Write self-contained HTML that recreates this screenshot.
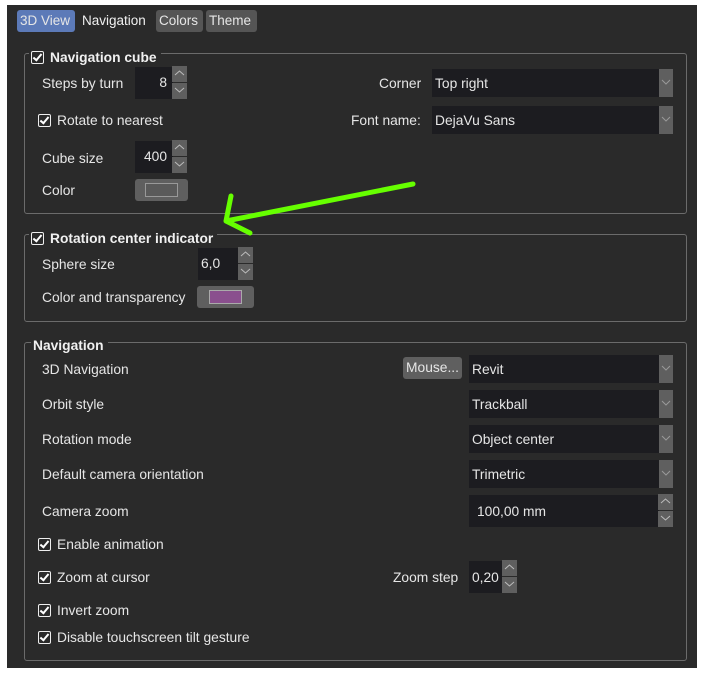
<!DOCTYPE html>
<html><head><style>
body{margin:0;width:709px;height:676px;background:#fff;position:relative;overflow:hidden;font-family:"Liberation Sans",sans-serif;font-size:13.8px;color:#e6e6e6}
.a{position:absolute;white-space:nowrap}
#bg{left:7px;top:5px;width:690px;height:663px;background:#2a2a2a}
.grp{position:absolute;border:1px solid #6b6b6b;border-radius:3px}
.ttl{position:absolute;background:#2a2a2a;font-weight:bold;padding:0 4px 0 2px;color:#f0f0f0}
.cb{display:inline-block;width:11px;height:11px;border:1px solid #eee;border-radius:2px;background:#2a2a2a;position:relative;vertical-align:-2px;margin-right:6px}
.cb:after{content:"";position:absolute;left:3px;top:0px;width:3px;height:7px;border:solid #fff;border-width:0 2px 2px 0;transform:rotate(40deg)}
.spin{position:absolute;background:#1c1c20;text-align:right;box-sizing:border-box;padding-right:6px}
.sb{position:absolute;background:#5f5f5f;width:15px}
.sb svg{display:block;margin:3px auto 0}
.combo{position:absolute;background:#1c1c20;box-sizing:border-box;padding-left:3px}
.combo .ar{position:absolute;right:0;top:0;bottom:0;width:14px;background:#5f5f5f}
.btn{position:absolute;background:#5f5f5f;border-radius:3px}
.tab{position:absolute;top:10px;height:22px;line-height:21px;border-radius:3px;padding:0 3px;white-space:nowrap;font-size:13.5px;box-sizing:border-box}
</style></head><body>
<div class="a" style="left:0;top:0;width:709px;height:5px;background:#fff"></div>
<div class="a" id="bg"></div>
<div class="tab" style="left:17px;background:#5c7ab8;width:58px">3D View</div>
<div class="tab" style="left:79px;color:#f0f0f0">Navigation</div>
<div class="tab" style="left:156px;background:#555;width:47px">Colors</div>
<div class="tab" style="left:206px;background:#555;width:51px">Theme</div>

<div class="grp" style="left:24px;top:53px;width:661px;height:159px"></div>
<div class="ttl" style="left:29px;top:50px"><span class="cb"></span>Navigation cube</div>
<div class="a" style="left:42px;top:76px">Steps by turn</div>
<div class="spin" style="left:135px;top:67px;width:38px;height:32px;line-height:32px">8</div>
<div class="sb" style="left:172px;top:66px;height:16px"><svg width="11" height="8"><path d="M1 6L5.5 2L10 6" stroke="#bbb" fill="none"/></svg></div>
<div class="sb" style="left:172px;top:83px;height:16px"><svg width="11" height="8"><path d="M1 2L5.5 6L10 2" stroke="#bbb" fill="none"/></svg></div>
<div class="a" style="left:38px;top:113px"><span class="cb"></span>Rotate to nearest</div>
<div class="a" style="left:42px;top:151px">Cube size</div>
<div class="spin" style="left:135px;top:141px;width:38px;height:32px;line-height:32px">400</div>
<div class="sb" style="left:172px;top:140px;height:16px"><svg width="11" height="8"><path d="M1 6L5.5 2L10 6" stroke="#bbb" fill="none"/></svg></div>
<div class="sb" style="left:172px;top:157px;height:16px"><svg width="11" height="8"><path d="M1 2L5.5 6L10 2" stroke="#bbb" fill="none"/></svg></div>
<div class="a" style="left:42px;top:183px">Color</div>
<div class="btn" style="left:135px;top:179px;width:53px;height:22px"><div class="a" style="left:10px;top:4px;width:31px;height:12px;border:1px solid #999;background:#5a5a5a"></div></div>
<div class="a" style="left:379px;top:76px">Corner</div>
<div class="combo" style="left:432px;top:69px;width:241px;height:28px;line-height:29px">Top right<div class="ar"><svg width="14" height="26"><path d="M3 11L7 15L11 11" stroke="#999" fill="none"/></svg></div></div>
<div class="a" style="left:351px;top:113px">Font name:</div>
<div class="combo" style="left:432px;top:106px;width:241px;height:28px;line-height:29px">DejaVu Sans<div class="ar"><svg width="14" height="26"><path d="M3 11L7 15L11 11" stroke="#999" fill="none"/></svg></div></div>

<div class="grp" style="left:24px;top:234px;width:661px;height:86px"></div>
<div class="ttl" style="left:29px;top:231px"><span class="cb"></span>Rotation center indicator</div>
<div class="a" style="left:42px;top:257px">Sphere size</div>
<div class="spin" style="left:198px;top:248px;width:40px;height:32px;line-height:32px;text-align:left;padding-left:3px">6,0</div>
<div class="sb" style="left:238px;top:247px;height:16px"><svg width="11" height="8"><path d="M1 6L5.5 2L10 6" stroke="#bbb" fill="none"/></svg></div>
<div class="sb" style="left:238px;top:264px;height:16px"><svg width="11" height="8"><path d="M1 2L5.5 6L10 2" stroke="#bbb" fill="none"/></svg></div>
<div class="a" style="left:42px;top:290px">Color and transparency</div>
<div class="btn" style="left:197px;top:286px;width:57px;height:22px"><div class="a" style="left:12px;top:4px;width:31px;height:12px;border:1px solid #aaa;background:#8a4f8e"></div></div>

<svg class="a" style="left:0;top:0" width="709" height="676"><path d="M413 184L226 221M231 196L226 221L250 233" stroke="#66ff00" stroke-width="5" stroke-linecap="round" stroke-linejoin="round" fill="none"/></svg>

<div class="grp" style="left:24px;top:342px;width:661px;height:317px"></div>
<div class="ttl" style="left:31px;top:338px">Navigation</div>
<div class="a" style="left:42px;top:362px">3D Navigation</div>
<div class="btn" style="left:403px;top:357px;width:59px;height:22px;line-height:22px;text-align:center">Mouse...</div>
<div class="combo" style="left:469px;top:355px;width:204px;height:28px;line-height:29px">Revit<div class="ar"><svg width="14" height="26"><path d="M3 11L7 15L11 11" stroke="#999" fill="none"/></svg></div></div>
<div class="a" style="left:42px;top:397px">Orbit style</div>
<div class="combo" style="left:469px;top:390px;width:204px;height:28px;line-height:29px">Trackball<div class="ar"><svg width="14" height="26"><path d="M3 11L7 15L11 11" stroke="#999" fill="none"/></svg></div></div>
<div class="a" style="left:42px;top:432px">Rotation mode</div>
<div class="combo" style="left:469px;top:425px;width:204px;height:28px;line-height:29px">Object center<div class="ar"><svg width="14" height="26"><path d="M3 11L7 15L11 11" stroke="#999" fill="none"/></svg></div></div>
<div class="a" style="left:42px;top:467px">Default camera orientation</div>
<div class="combo" style="left:469px;top:460px;width:204px;height:28px;line-height:29px">Trimetric<div class="ar"><svg width="14" height="26"><path d="M3 11L7 15L11 11" stroke="#999" fill="none"/></svg></div></div>
<div class="a" style="left:42px;top:504px">Camera zoom</div>
<div class="spin" style="left:469px;top:495px;width:190px;height:32px;line-height:33px;text-align:left;padding-left:8px">100,00 mm</div>
<div class="sb" style="left:658px;top:494px;height:16px"><svg width="11" height="8"><path d="M1 6L5.5 2L10 6" stroke="#bbb" fill="none"/></svg></div>
<div class="sb" style="left:658px;top:511px;height:16px"><svg width="11" height="8"><path d="M1 2L5.5 6L10 2" stroke="#bbb" fill="none"/></svg></div>
<div class="a" style="left:38px;top:537px"><span class="cb"></span>Enable animation</div>
<div class="a" style="left:38px;top:570px"><span class="cb"></span>Zoom at cursor</div>
<div class="a" style="left:393px;top:570px">Zoom step</div>
<div class="spin" style="left:469px;top:561px;width:33px;height:32px;line-height:33px;text-align:left;padding-left:3px">0,20</div>
<div class="sb" style="left:502px;top:560px;height:16px"><svg width="11" height="8"><path d="M1 6L5.5 2L10 6" stroke="#bbb" fill="none"/></svg></div>
<div class="sb" style="left:502px;top:577px;height:16px"><svg width="11" height="8"><path d="M1 2L5.5 6L10 2" stroke="#bbb" fill="none"/></svg></div>
<div class="a" style="left:38px;top:603px"><span class="cb"></span>Invert zoom</div>
<div class="a" style="left:38px;top:630px"><span class="cb"></span>Disable touchscreen tilt gesture</div>
</body></html>
